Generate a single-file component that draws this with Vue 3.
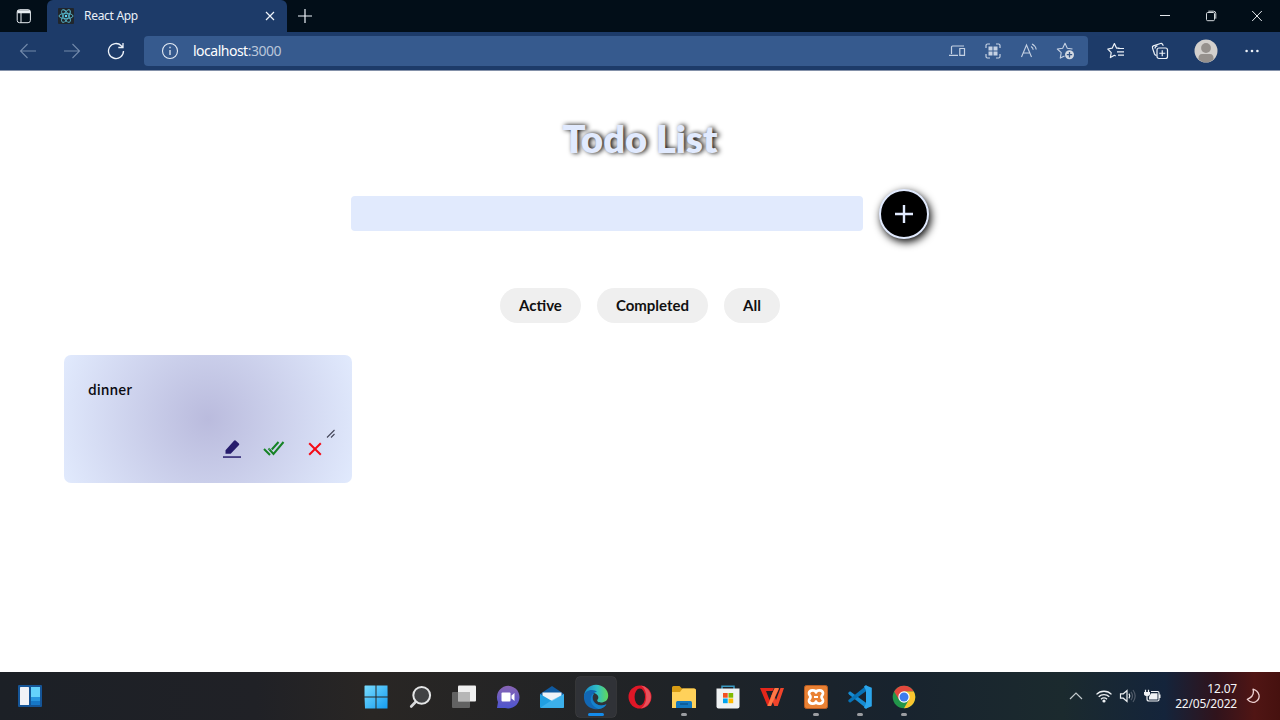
<script setup>
const filters = ['Active', 'Completed', 'All']
const squares = [[0, '#f25022'], [1, '#7fba00'], [2, '#00a4ef'], [3, '#ffb900']]
const petals = [0, 60, 120]
</script>

<template>
  <div class="screen">
    <header class="tabs">
      <div class="workspace">
        <svg width="16" height="16" viewBox="0 0 16 16" fill="none" stroke="#e8edf2">
          <rect x="1.2" y="1.7" width="13.2" height="13" rx="2.3" />
          <path d="M1.5 3.2h12.6M1.5 4.4h12.6" stroke-width="1.8" /><path d="M5 5v9.6" />
        </svg>
      </div>
      <div class="tab">
        <svg class="favicon" width="16" height="16" viewBox="0 0 16 16" fill="none" stroke="#58b9cd" stroke-width=".9">
          <rect width="16" height="16" rx="1" fill="#20262c" stroke="none" />
          <ellipse v-for="p in petals" :key="p" cx="8" cy="8" rx="7" ry="2.7" :transform="`rotate(${p} 8 8)`" />
          <circle cx="8" cy="8" r="1.2" fill="#61dafb" stroke="none" />
        </svg>
        <span class="title">React App</span>
        <svg width="10" height="10" viewBox="0 0 10 10" stroke="#eef3fa" stroke-width="1.2"><path d="M1 1l8 8M9 1l-8 8" /></svg>
      </div>
      <div class="newtab"><svg width="14" height="14" viewBox="0 0 14 14" stroke="#eef3fa" stroke-width="1.2"><path d="M7 0v14M0 7h14" /></svg></div>
      <div class="window">
        <svg width="12" height="12" viewBox="0 0 12 12" stroke="#e4e8ec"><path d="M1 5.5h10" /></svg>
        <svg width="12" height="12" viewBox="0 0 12 12" fill="none" stroke="#d5dade"><rect x="1.5" y="2.5" width="8" height="8.2" rx="1.2" /><path d="M3.3 1.2h5.2q2.3 0 2.3 2.3v5.2" /></svg>
        <svg width="12" height="12" viewBox="0 0 12 12" stroke="#e4e8ec"><path d="M1.2 1l9.6 10M10.8 1L1.2 11" /></svg>
      </div>
    </header>

    <nav class="toolbar">
      <div class="slot"><svg width="18" height="16" viewBox="0 0 18 16" fill="none" stroke="#7289aa" stroke-width="1.1"><path d="M17 8H1.5M8.5 1l-7 7 7 7" /></svg></div>
      <div class="slot"><svg width="18" height="16" viewBox="0 0 18 16" fill="none" stroke="#7289aa" stroke-width="1.1"><path d="M1 8h15.500M9.500 1l7 7-7 7" /></svg></div>
      <div class="slot"><svg width="18" height="18" viewBox="0 0 18 18" fill="none" stroke="#eef3fa" stroke-width="1.3"><path d="M16.500 9a7.500 7.500 0 1 1-2.200-5.300l1.500 1.400M16 1v4.500h-4.700" /></svg></div>
      <div class="address">
        <svg class="info" width="18" height="18" viewBox="0 0 18 18" fill="none" stroke="#e4ebf4" stroke-width="1.1"><circle cx="9" cy="9" r="7.500" /><path d="M9 8v5M9 4.800v1.500" stroke-width="1.300" /></svg>
        <span class="url">localhost<i>:3000</i></span>
        <div class="tools">
          <svg width="18" height="18" viewBox="0 0 18 18" fill="none" stroke="#c5d1e3" stroke-width="1.2"><path d="M3.500 12V5q0-1 1-1H16M1 13.300h9M11.800 6.500h4.700v6.800h-4.700z" /></svg>
          <svg width="18" height="18" viewBox="0 0 18 18" fill="none" stroke="#c5d1e3" stroke-width="1.2"><path d="M2 6V3.500Q2 2 3.500 2H6M12 2h2.500Q16 2 16 3.500V6M16 12v2.500q0 1.500-1.500 1.500H12M6 16H3.500Q2 16 2 14.500V12" /><path d="M4.500 4.500h4v4h-4zM9.500 4.500h4v4h-4zM4.500 9.500h4v4h-4zM9.500 9.500h4v4h-4z" fill="#c5d1e3" stroke="none" /></svg>
          <svg width="18" height="18" viewBox="0 0 18 18" fill="none" stroke="#c5d1e3" stroke-width="1.1"><path d="M1.500 15L6.500 3l5 12M3.300 11h6.400M11 4.500q2 1 2.200 3.300M12 2q3.600 1.800 4.200 5.500" /></svg>
          <svg width="20" height="18" viewBox="0 0 20 18" fill="none" stroke="#c5d1e3" stroke-width="1.1" stroke-linejoin="round"><path d="M16.500 7L11.300 6.200 9 1.300 6.700 6.200 1.300 7l3.900 3.700-.9 5.400L8.500 14" /><circle cx="13.500" cy="12.700" r="4.500" fill="#d4dae2" stroke="none" /><path d="M13.500 10v5.400M10.800 12.700h5.400" stroke="#365687" stroke-width="1.300" /></svg>
        </div>
      </div>
      <div class="actions">
        <div class="slot"><svg width="18" height="18" viewBox="0 0 18 18" fill="none" stroke="#edf2f8" stroke-width="1.2" stroke-linejoin="round"><path d="M12.500 6.200H9.600L7.400 1.600 5.200 6.200.8 7l3.400 3.600-.8 5 4-2.300 1.300.7M11 6.500h6M10 9.800h7M11 13.200h6" /></svg></div>
        <div class="slot"><svg width="18" height="18" viewBox="0 0 18 18" fill="none" stroke="#edf2f8" stroke-width="1.2"><rect x="6" y="6" width="10.500" height="10.500" rx="2" /><path d="M11.250 8.300v6M8.250 11.250h6M5.500 13.500Q4 13.300 3.500 12L1.500 6q-.5-1.500.9-2.100L9.500 1.500q1.300-.4 2 .7l.8 1.600M4 6.500Q4 4 6.500 4" /></svg></div>
        <div class="slot profile"><svg width="24" height="24" viewBox="0 0 24 24"><circle cx="12" cy="12" r="11.500" fill="#d3d0cd" /><circle cx="12" cy="9" r="4.900" fill="#96918d" /><path d="M4.500 20.500q-.4-5.500 3.500-5.500h8q3.900 0 3.500 5.500a11.500 11.500 0 0 1-15 0z" fill="#96918d" /></svg></div>
        <div class="slot"><svg width="14" height="4" viewBox="0 0 14 4" fill="#edf2f8"><circle cx="1.600" cy="2" r="1.300" /><circle cx="7" cy="2" r="1.300" /><circle cx="12.400" cy="2" r="1.300" /></svg></div>
      </div>
    </nav>

    <main>
      <h1>Todo List</h1>
      <form class="entry">
        <div class="field"></div>
        <div class="add"><svg width="20" height="20" viewBox="0 0 20 20" stroke="#e1eafe" stroke-width="2.400"><path d="M10 1v18M1 10h18" /></svg></div>
      </form>
      <div class="filters"><span v-for="f in filters" :key="f">{{ f }}</span></div>
      <article class="card">
        <div class="note">
          <span>dinner</span>
          <svg width="10" height="10" viewBox="0 0 10 10" stroke="#45475a" stroke-width="1.100"><path d="M1 8.500L8.500 1M5 8.500L8.500 5" /></svg>
        </div>
        <div class="buttons">
          <svg width="20" height="20" viewBox="0 0 20 20" fill="#261c6c"><path d="M3.500 14.800v-3.600L12 1.700q.8-.8 1.600-.1l3.300 2.800q.8.700.1 1.500L8.700 14.800z" /><path d="M1 17.300h18v1.500H1z" /></svg>
          <svg width="22" height="18" viewBox="0 0 22 18" fill="none" stroke="#168326" stroke-width="2"><path d="M1 9l6 6M6.500 9.500l4 4.500L20.500 2M5.500 8.500l.7.800M8.800 9.500L15.500 2" /></svg>
          <svg width="14" height="14" viewBox="0 0 14 14" stroke="#f40b16" stroke-width="2"><path d="M1.200 1.200l11.600 11.600M12.800 1.200L1.200 12.800" /></svg>
        </div>
      </article>
    </main>

    <footer>
      <div class="widgets">
        <svg width="24" height="22" viewBox="0 0 24 22"><rect width="24" height="22" rx="1" fill="#155597" /><rect x="2" y="2" width="9" height="18" rx=".6" fill="#f0f2f6" /><path d="M13 2h9v10h-9z" fill="#65d2fc" /><path d="M13 12h9v4h-9z" fill="#2795df" /><path d="M13 16h9v4h-9z" fill="#1677c7" /></svg>
      </div>
      <div class="apps">
        <div class="app"><svg width="24" height="24" viewBox="0 0 24 24"><defs><linearGradient id="win" x2="1" y2="1"><stop stop-color="#78dcff" /><stop offset="1" stop-color="#159cf0" /></linearGradient></defs><path d="M1 .5h10.500V11.500H.5V1zM12.500.5h11l.1 11h-11.100zM.5 12.500h11v11H1zM12.500 12.500h11.100l-.1 11h-11z" fill="url(#win)" /></svg></div>
        <div class="app"><svg width="24" height="24" viewBox="0 0 24 24"><path d="M8.500 16L3.200 21.500" stroke="#d6d7d9" stroke-width="2.600" stroke-linecap="round" /><circle cx="13.700" cy="10.300" r="8.400" fill="#414244" stroke="#e4e5e6" stroke-width="2" /></svg></div>
        <div class="app"><svg width="24" height="24" viewBox="0 0 24 24"><rect x="6" y=".5" width="18" height="16" rx="1" fill="#f0f0f0" /><rect x="0" y="7" width="18" height="16" rx="1" fill="#777" opacity=".75" /><path d="M6 7h12v9.500H6z" fill="#b7b7b7" /></svg></div>
        <div class="app"><svg width="24" height="24" viewBox="0 0 24 24"><defs><linearGradient id="chat" y2="1" x2="0"><stop stop-color="#8864b3" /><stop offset="1" stop-color="#4d55d0" /></linearGradient></defs><path d="M1 23l1-6A11.300 11.300 0 1 1 9 23z" fill="url(#chat)" /><rect x="5.500" y="7.500" width="9" height="9" rx="1" fill="#fff" /><path d="M15.500 10.500l3-2.500v8l-3-2.500z" fill="#fff" /></svg></div>
        <div class="app"><svg width="26" height="24" viewBox="0 0 26 24"><path d="M1 9L13 1l12 8v3H1z" fill="#0f5aa0" /><path d="M3.500 7.500h19V18h-19z" fill="#edf2f8" /><path d="M1 9l12 7L25 9v13q0 1-1 1H2q-1 0-1-1z" fill="#219fe1" /><path d="M1.300 22.700L13 15l12-6v13q0 1-1 1z" fill="#4ebcf1" opacity=".6" /></svg></div>
        <div class="app active"><svg width="26" height="26" viewBox="0 0 26 26"><defs><linearGradient id="edge" x2="1"><stop stop-color="#1687ca" /><stop offset=".55" stop-color="#31bfc5" /><stop offset="1" stop-color="#62d857" /></linearGradient></defs><path d="M1 13C1 6 6.500.8 13 .8c7.200 0 12.200 5.400 12.200 10.700 0 5-3.700 7-7.200 7-3.200 0-4-1.400-3.700-2.400 1.800-2.200 1.300-4.500-.8-5.900C9 7 2.500 8.500 1 13z" fill="url(#edge)" /><path d="M1 12c.5-3.700 4-6 7.700-6 2.300 0 4 .7 5.300 1.800-6 .2-6 9.700.7 12.900 3.500 1.600 6.600.7 8.800-.4C20.500 25.700 13 26.500 8 24 3 22 .5 17 1 12z" fill="#1267b4" /><path d="M10 9.500c-5 5.500-1.500 13 5.500 15.500 3.500-.3 6.500-2.200 8-4.700-7 3-14.500-.6-14-6.800.1-1.500.8-2.500 1.500-3.500z" fill="#1682cb" /></svg></div>
        <div class="app"><svg width="24" height="24" viewBox="0 0 24 24"><ellipse cx="12" cy="12" rx="11.500" ry="11.500" fill="#df1727" /><path d="M13 .6a11.500 11.500 0 0 1 0 22.800C20 19 20 5 13 .6z" fill="#e8525c" /><ellipse cx="11.800" cy="12" rx="5.200" ry="8.500" fill="#202125" /></svg></div>
        <div class="app running"><svg width="26" height="24" viewBox="0 0 26 24"><path d="M1 2.500Q1 1 2.500 1h6L11 3.500h12Q25 3.500 25 5.500V9H1z" fill="#d89c14" /><path d="M1 7h8l2.500-3.500H23q2 0 2 2V23H1z" fill="#ffd15a" /><path d="M5 23v-5.500Q5 16 6.500 16h13q1.500 0 1.500 1.500V23z" fill="#1378c0" /><path d="M9 19h8" stroke="#0c568f" stroke-width="1.500" /></svg></div>
        <div class="app"><svg width="24" height="24" viewBox="0 0 24 24"><path d="M6 5V1.200h12V5" fill="none" stroke="#3b9bc4" stroke-width="1.500" /><path d="M.5 3.500h23v18q0 2-2 2h-19q-2 0-2-2z" fill="#eff2f3" /><rect v-for="s in squares" :key="s[0]" :x="7 + s[0] % 2 * 5.500" :y="8 + Math.floor(s[0] / 2) * 5.500" width="4.700" height="4.700" :fill="s[1]" /></svg></div>
        <div class="app"><svg width="24" height="20" viewBox="0 0 24 20"><path d="M0 1h14l-1.500 3H6l3.500 9L14 2h5l-8 17H7.500z" fill="#e4271b" /><path d="M13 5l3 8L20.500 1H24l-6.200 18h-3.500L11 10z" fill="#f1442b" /><path d="M14.500 1H19L11 19H7.500z" fill="#ff7946" /></svg></div>
        <div class="app running"><svg width="24" height="24" viewBox="0 0 24 24"><rect x=".5" y=".5" width="23" height="23" rx="2" fill="#e98133" stroke="#b95c22" /><path d="M12 7.500C12.500 4.500 18.500 4.500 19 8 19.200 10 17.500 10.500 17.500 12 17.500 13.500 19.200 14 19 16 18.500 19.500 12.500 19.500 12 16.500 11.500 19.500 5.500 19.500 5 16 4.800 14 6.500 13.500 6.500 12 6.500 10.500 4.800 10 5 8 5.500 4.500 11.500 4.500 12 7.500z" fill="none" stroke="#fff" stroke-width="2.700" stroke-linejoin="round" /><path d="M10 12h4" stroke="#fff" stroke-width="2" /></svg></div>
        <div class="app running"><svg width="26" height="24" viewBox="0 0 26 24"><path d="M1 8l2-1.800L20 18.500V24L2 9.500z" fill="#168bd1" /><path d="M1 16l2 1.800L20 5.500V0L2 14.500z" fill="#0872b5" /><path d="M18.500.2l6.300 2.500v18.600l-6.300 2.500-1.500-1.300 2-4V5.500l-2-4z" fill="#2ba6ec" /></svg></div>
        <div class="app running"><svg width="24" height="24" viewBox="0 0 24 24"><circle cx="12" cy="12" r="11.300" fill="#22964a" /><path d="M2.200 6.400A11.300 11.300 0 0 1 21.800 6.400H12L7.100 14.800z" fill="#e2483d" /><path d="M21.800 6.400A11.300 11.300 0 0 1 12 23.300l4.900-8.500L12 6.400z" fill="#fbc52f" /><circle cx="12" cy="12" r="5.700" fill="#fff" /><circle cx="12" cy="12" r="4.500" fill="#3d7bed" /></svg></div>
      </div>
      <div class="tray">
        <svg width="14" height="8" viewBox="0 0 14 8" fill="none" stroke="#c3cacd" stroke-width="1.200"><path d="M1 7l6-6 6 6" /></svg>
        <svg width="18" height="14" viewBox="0 0 18 14" fill="none" stroke="#eef1f4" stroke-width="1.300"><path d="M1.500 5.400a10.500 10.500 0 0 1 15 0M3.700 7.800a7.400 7.400 0 0 1 10.600 0M6 10.200a4.200 4.200 0 0 1 6 0" /><circle cx="9" cy="12" r="1.600" fill="#eef1f4" stroke="none" /></svg>
        <svg width="18" height="14" viewBox="0 0 18 14" fill="none" stroke="#edf0f2" stroke-width="1.200"><path d="M1.500 4.800v4.400h2.800L8 12.500v-11L4.300 4.800z" /><path d="M10 4.600q1.500 2.400 0 4.800" /><path d="M12 2.800q3 4.200 0 8.400M14 1q4.300 6 0 12" stroke="#505a68" /></svg>
        <svg width="18" height="14" viewBox="0 0 18 14" fill="none" stroke="#f1f3f5"><path d="M2.500.8v3M5.500.8v3M4 6v4q0 2 2 2h8.500q1.500 0 1.500-1.500V4q0-1.500-1.500-1.500H8" stroke-width="1.200" /><path d="M1 3h6v2.500Q6.500 7 4 7T1 5.500zM6 8l2-3.700h6.500V10.500H6zM16 5.500h1.500v3.500H16z" fill="#f1f3f5" stroke="none" /></svg>
        <div class="clock"><span>12.07</span><span>22/05/2022</span></div>
        <svg width="14" height="16" viewBox="0 0 14 16" fill="none" stroke="#edcfd0" stroke-width="1.300" stroke-linejoin="round"><path d="M7 1.200Q9 8.200 1.300 11.300 5 15.700 9.500 13.800 13.800 11.500 13 7 11.700 2.500 7 1.200z" /></svg>
      </div>
    </footer>
  </div>
</template>

<style>
body { margin: 0; overflow: hidden; }
</style>

<style scoped>
.screen { width: 1280px; height: 720px; display: flex; flex-direction: column; background: #fff; font-family: "Noto Sans", sans-serif; overflow: hidden; }
svg { display: block; flex: none; }
.tabs { height: 32px; flex: none; display: flex; background: #020e18; }
.workspace { width: 47px; display: grid; place-items: center; }
.tab { width: 240px; box-sizing: border-box; padding: 0 12px 0 11px; display: flex; align-items: center; background: #1d3b69; border-radius: 6px 6px 0 0; }
.title { flex: 1; margin-left: 10px; padding-bottom: 1px; color: #eaf0f8; font-size: 12px; letter-spacing: -.3px; }
.newtab { width: 35px; display: grid; place-items: center; }
.window { display: flex; align-items: center; gap: 34px; margin-left: auto; padding-right: 17px; }
.toolbar { height: 39px; box-sizing: border-box; flex: none; display: flex; align-items: center; padding: 0 6px; background: #1d3b69; border-bottom: 1px solid #8491a9; }
.slot { width: 44px; display: grid; place-items: center; flex: none; }
.profile { width: 48px; }
.address { width: 944px; height: 30px; margin-left: 6px; flex: none; display: flex; align-items: center; background: #365a8e; border-radius: 4px; }
.info { margin-left: 17px; }
.url { margin-left: 14px; padding-bottom: 1px; color: #fff; font-size: 14px; letter-spacing: -.5px; }
.url i { font-style: normal; color: #b9c6da; }
.tools { margin-left: auto; padding-right: 12px; display: flex; gap: 18px; }
.actions { margin-left: 6px; display: flex; align-items: center; }
main { flex: 1; display: flex; flex-direction: column; align-items: center; }
h1 { margin: 40px 0 0; height: 54px; line-height: 54px; font-family: Lato, sans-serif; font-size: 38px; font-weight: 800; color: #e1eafe; text-shadow: 2px 0 5px #000; white-space: nowrap; }
.entry { margin: 22px 0 0; height: 54px; display: flex; align-items: center; gap: 16px; }
.field { width: 512px; height: 35px; margin-bottom: 1px; border-radius: 4px; background: #e1eafd; }
.add { width: 46px; height: 46px; display: grid; place-items: center; border: 2px solid #e1eafe; border-radius: 50%; background: #000; box-shadow: 2px 3px 9px #000; }
.filters { margin-top: 46.5px; display: flex; gap: 16px; }
.filters span { height: 35px; padding: 0 19px; line-height: 34px; border-radius: 18px; background: #efefef; color: #111; font-family: Lato, sans-serif; font-size: 15px; font-weight: 700; }
.card { width: 288px; height: 128px; box-sizing: border-box; align-self: flex-start; margin: 32px 0 0 64px; padding: 24px 16px 0 24px; border-radius: 7px; background: radial-gradient(circle, #babbdd, #e1eafd); }
.note { height: 60px; display: flex; justify-content: space-between; align-items: flex-start; color: #0b0b12; font-family: "Noto Sans CJK JP", sans-serif; font-size: 14px; line-height: 20px; font-weight: 500; }
.note svg { align-self: flex-end; }
.buttons { display: flex; justify-content: flex-end; align-items: center; gap: 21px; padding-right: 14px; }
.buttons svg:last-child { margin-left: 2px; }
footer { height: 48px; flex: none; display: flex; align-items: center; background: linear-gradient(90deg, #1c2026 0, #202126 20%, #292624 29%, #202326 50%, #18232e 70%, #1b2a2e 83%, #14243b 91%, #30131c 95%, #501514 98%, #46110f 100%); }
.widgets { width: 336px; box-sizing: border-box; padding-left: 18px; margin-right: 18px; flex: none; }
.apps { display: flex; flex: none; }
.app { width: 40px; height: 40px; margin: 2px 2px 0; display: flex; align-items: center; justify-content: center; position: relative; border-radius: 4px; box-sizing: border-box; }
.active { background: #303237; box-shadow: 0 0 0 .5px #48484b; }
.running::after, .active::after { content: ''; position: absolute; bottom: 1px; width: 6px; height: 3px; border-radius: 2px; background: #9b9da1; }
.active::after { width: 16px; background: #148bea; }
.tray { margin-left: auto; display: flex; align-items: center; padding-right: 20px; }
.tray > svg { margin-right: 6px; }
.tray > svg:first-child { margin-right: 12px; }
.tray > svg:last-child { margin: 0 0 0 9px; }
.clock { width: 62px; margin-left: 8px; display: flex; flex-direction: column; align-items: flex-end; color: #f4f5f7; font-size: 12px; line-height: 15px; letter-spacing: -.2px; }
</style>
